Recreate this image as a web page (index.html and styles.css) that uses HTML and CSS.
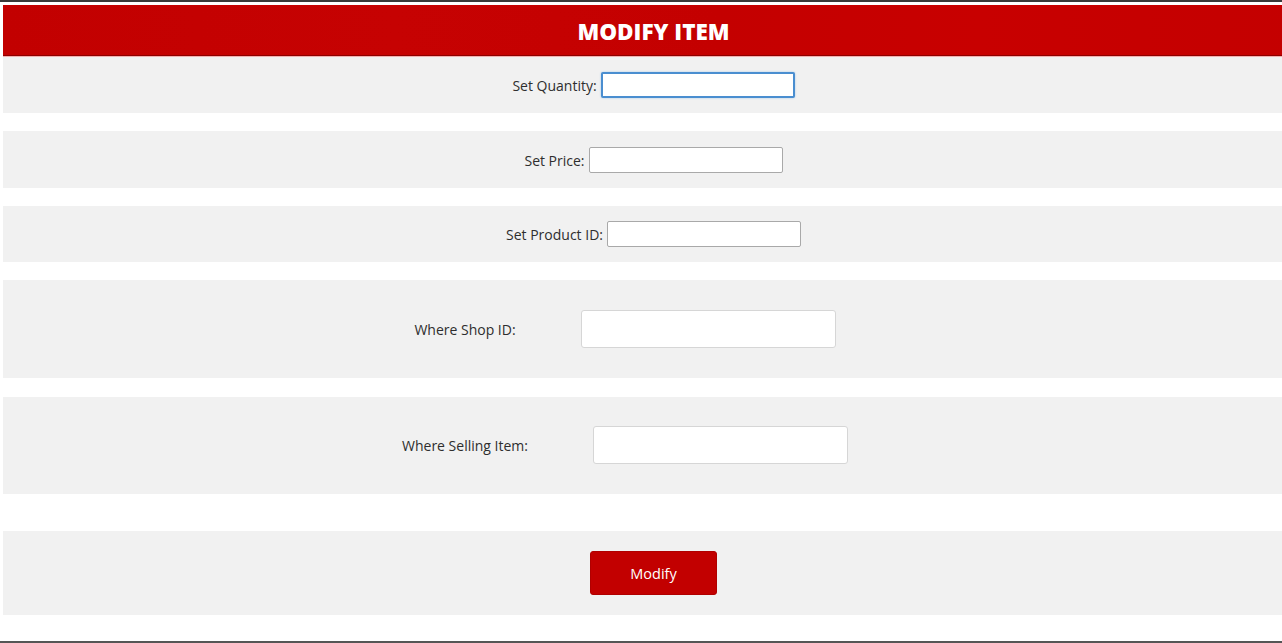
FILE: index.html
```html
<!DOCTYPE html>
<html lang="en">
<head>
<meta charset="utf-8">
<title>Modify Item</title>
<link rel="stylesheet" href="styles.css">
</head>
<body>
<div class="topline"></div>
<div class="page">
  <header class="header"><h1 class="title">MODIFY ITEM</h1></header>
  <form class="form">
    <div class="band band-small">
      <label class="label">Set Quantity:</label><input class="field field-small field-focus" type="text">
    </div>
    <div class="band band-small band-tall">
      <label class="label">Set Price:</label><input class="field field-small" type="text">
    </div>
    <div class="band band-small">
      <label class="label">Set Product ID:</label><input class="field field-small" type="text">
    </div>
    <div class="band band-large">
      <div class="pair">
        <label class="label">Where Shop ID:</label>
        <input class="field field-large" type="text">
      </div>
    </div>
    <div class="band band-large band-last">
      <div class="pair">
        <label class="label">Where Selling Item:</label>
        <input class="field field-large" type="text">
      </div>
    </div>
    <div class="band band-button">
      <button class="button" type="button">Modify</button>
    </div>
  </form>
</div>
<div class="bottomline"></div>
</body>
</html>
```
FILE: styles.css
```css
html, body {
  margin: 0;
  padding: 0;
  background: #ffffff;
  overflow: hidden;
  height: 643px;
}
body {
  font-family: "Open Sans", "Noto Sans", sans-serif;
  color: #333333;
  position: relative;
}
.topline {
  height: 2px;
  background: #3a3a3a;
  margin-bottom: 3px;
}
.page {
  margin-left: 3px;
  width: 1301px;
}
.header {
  height: 50px;
  background: linear-gradient(90deg, #c20000 0%, #c60202 30%, #c40000 55%, #c80000 75%, #c40000 100%);
  border-bottom: 1px solid #8c0000;
  box-shadow: 0 1px 0 #f4b0b0;
  display: flex;
  align-items: center;
  justify-content: center;
  margin-bottom: 1px;
}
.title {
  margin: 0;
  padding-top: 2px;
  color: #ffffff;
  font-family: "Open Sans", sans-serif;
  font-weight: 800;
  font-size: 22.5px;
}
.form {
  display: flex;
  flex-direction: column;
}
.band {
  background: #f1f1f1;
  margin-bottom: 18px;
}
.band-small {
  padding: 15px 0;
  height: 26px;
  display: flex;
  justify-content: center;
  align-items: center;
  gap: 4px;
}
.band-tall {
  padding-top: 16px;
}
.band-large {
  padding: 30px 57px 30px 0;
}
.band-last {
  padding-top: 29px;
  margin-top: 1px;
  margin-bottom: 37px;
}
.band-button {
  padding: 20px 0;
  margin-bottom: 0;
  display: flex;
  justify-content: center;
}
.label {
  font-size: 14px;
  color: #2e2e2e;
}
.pair {
  display: flex;
  justify-content: center;
  align-items: center;
  gap: 65px;
}
.field {
  box-sizing: border-box;
  background: #ffffff;
  outline: none;
  font-family: inherit;
  margin: 0;
}
.field-small {
  width: 194px;
  height: 26px;
  border: 1px solid #a9a9a9;
  border-radius: 2px;
}
.field-focus {
  border: 2px solid #4a8ed0;
  box-shadow: 0 0 2px #9cc4ea;
}
.field-large {
  width: 255px;
  height: 38px;
  border: 1px solid #d6d6d6;
  border-radius: 3px;
}
.button {
  width: 127px;
  height: 44px;
  background: #c20000;
  color: #ffffff;
  border: 1px solid #b00000;
  border-radius: 3px;
  font-family: "Open Sans", sans-serif;
  font-size: 14.5px;
  cursor: pointer;
}
.bottomline {
  position: absolute;
  left: 0;
  right: 0;
  top: 641px;
  height: 2px;
  background: #555555;
}
```
